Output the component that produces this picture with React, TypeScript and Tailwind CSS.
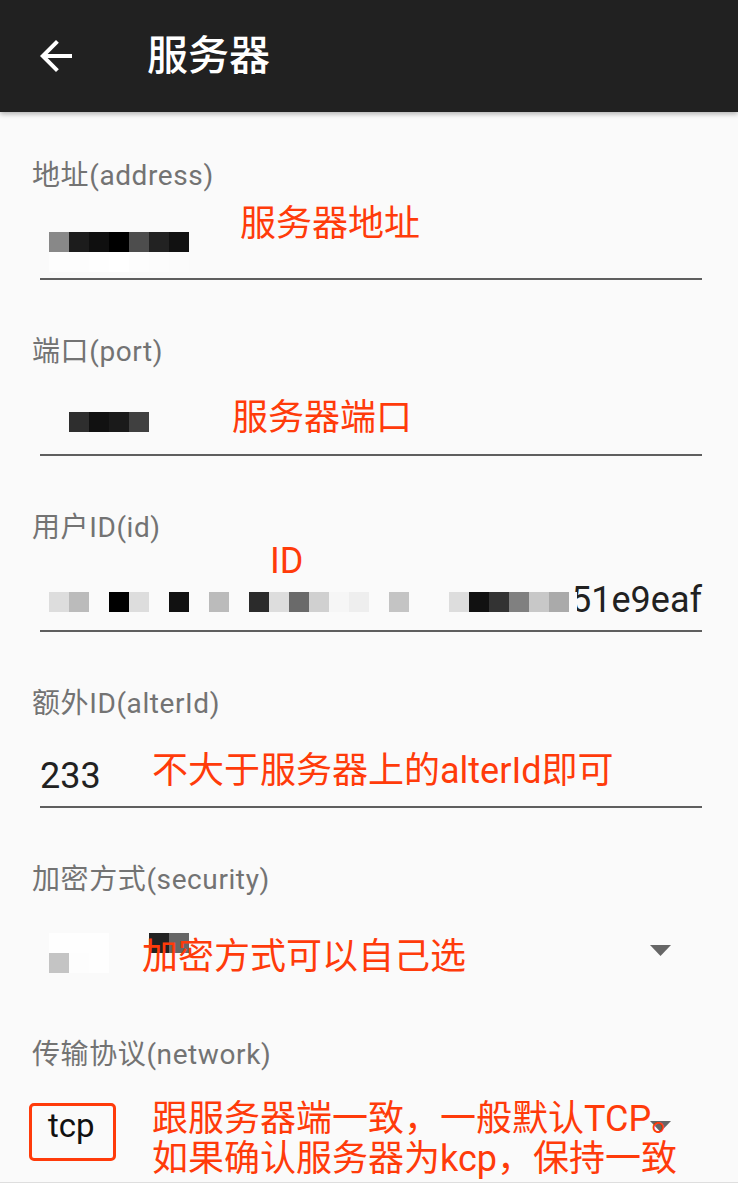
import React from 'react';

// mosaic cells are 20px squares; '' means a gap where the page shows through
type Cells = string[];

const idRow: Cells = [
  '#dddddd', '#bbbbbb', '', '#000000', '#dddddd', '', '#111111', '', '#bbbbbb', '',
  '#2b2b2b', '#dddddd', '#6a6a6a', '#d0d0d0', '#f6f6f6', '#eeeeee', '', '#c4c4c4', '', '#fafafa',
  '#dddddd', '#111111', '#333333', '#808080', '#c8c8c8', '#aaaaaa',
];

function Mosaic({ cells }: { cells: Cells }) {
  return (
    <div className="flex">
      {cells.map((c, i) => (
        <div key={i} className="w-[20px] h-[20px] shrink-0" style={{ backgroundColor: c || 'transparent' }} />
      ))}
    </div>
  );
}

function Label({ children }: { children: React.ReactNode }) {
  return <div className="h-[36px] pl-[32px] text-[28px] leading-[36px] tracking-[0.6px] text-[#737373]">{children}</div>;
}

function Note({ children, className }: { children: React.ReactNode; className: string }) {
  return (
    <div className={`absolute whitespace-nowrap text-[36px] leading-[36px] text-[#ff3b0a] ${className}`}>{children}</div>
  );
}

function Caret({ className }: { className: string }) {
  return (
    <svg className={`absolute ${className}`} width="21" height="11" viewBox="0 0 21 11">
      <polygon points="0,0 21,0 10.5,11" fill="#666666" />
    </svg>
  );
}

function Underline() {
  return <div className="h-[2px] bg-[#5e5e5e]" />;
}

export default function App() {
  return (
    <div className="w-full h-[1183px] overflow-hidden bg-[#fafafa] font-[family-name:Roboto,'Noto_Sans_CJK_SC',sans-serif]">
      {/* Toolbar */}
      <header className="relative z-10 h-[112px] bg-[#212121] flex items-center shadow-[0_2px_5px_rgba(0,0,0,0.3)]">
        <svg className="ml-[32px]" width="48" height="48" viewBox="0 0 24 24">
          <path d="M20 11H7.83l5.59-5.59L12 4l-8 8 8 8 1.41-1.41L7.83 13H20v-2z" fill="#ffffff" />
        </svg>
        <h1 className="ml-[67px] text-[41px] leading-[48px] font-medium text-white">服务器</h1>
      </header>

      <main className="pt-[46px]">
        {/* address */}
        <section className="mb-[54px]">
          <Label>地址(address)</Label>
          <div className="ml-[40px] mr-[36px]">
            <div className="relative h-[84px] pt-[38px] pl-[9px]">
              <Mosaic cells={['#888888', '#1c1c1c', '#0f0f0f', '#000000', '#4d4d4d', '#222222', '#111111']} />
              <Mosaic cells={['#fdfdfd', '#fdfdfd', '#fefefe', '#ffffff', '#fdfdfd', '#fcfcfc', '#fbfbfb']} />
              <Note className="left-[200px] top-[12px]">服务器地址</Note>
            </div>
            <Underline />
          </div>
        </section>

        {/* port */}
        <section className="mb-[54px]">
          <Label>端口(port)</Label>
          <div className="ml-[40px] mr-[36px]">
            <div className="relative h-[84px] pt-[42px] pl-[29px]">
              <Mosaic cells={['#2e2e2e', '#111111', '#1a1a1a', '#404040']} />
              <Note className="left-[192px] top-[30px]">服务器端口</Note>
            </div>
            <Underline />
          </div>
        </section>

        {/* id */}
        <section className="mb-[54px]">
          <Label>用户ID(id)</Label>
          <div className="ml-[40px] mr-[36px]">
            <div className="relative h-[84px] pt-[30px]">
              <div className="flex justify-end h-[48px] text-[36px] leading-[48px] text-[#212121]">51e9eaf</div>
              <div className="absolute left-[9px] top-[46px] flex">
                <Mosaic cells={idRow} />
                <div className="w-[8px] h-[20px] bg-[#fafafa]" />
              </div>
              <Note className="left-[230px] top-[-3px]">ID</Note>
            </div>
            <Underline />
          </div>
        </section>

        {/* alterId */}
        <section className="mb-[54px]">
          <Label>额外ID(alterId)</Label>
          <div className="ml-[40px] mr-[36px]">
            <div className="relative h-[84px] pt-[30px]">
              <div className="h-[48px] text-[36px] leading-[48px] text-[#212121]">233</div>
              <Note className="left-[112px] top-[31px]">不大于服务器上的alterId即可</Note>
            </div>
            <Underline />
          </div>
        </section>

        {/* security */}
        <section>
          <Label>加密方式(security)</Label>
          <div className="relative ml-[40px] mr-[36px] h-[139px] pt-[35px] pl-[9px]">
            <Mosaic cells={['#fefefe', '#fefefe', '#fefefe', '', '', '#222222', '#666666']} />
            <Mosaic cells={['#c4c4c4', '#fdfdfd', '#fefefe']} />
            <Note className="left-[102px] top-[41px]">加密方式可以自己选</Note>
            <Caret className="left-[610px] top-[47px]" />
          </div>
        </section>

        {/* network */}
        <section>
          <Label>传输协议(network)</Label>
          <div className="relative ml-[40px] mr-[36px] h-[109px]">
            <div className="pt-[35px] pl-[8px] text-[33px] leading-[36px] text-[#111111]">tcp</div>
            <div className="absolute left-[-11px] top-[30px] w-[87px] h-[58px] rounded-[5px] border-[3px] border-[#ff3b0a]" />
            <Caret className="left-[610px] top-[48px]" />
            <Note className="left-[112px] top-[26px] leading-[40px]">
              跟服务器端一致，一般默认TCP。
              <br />
              如果确认服务器为kcp，保持一致
            </Note>
          </div>
          <div className="h-[2px] bg-[#dedede]" />
        </section>
      </main>
    </div>
  );
}
